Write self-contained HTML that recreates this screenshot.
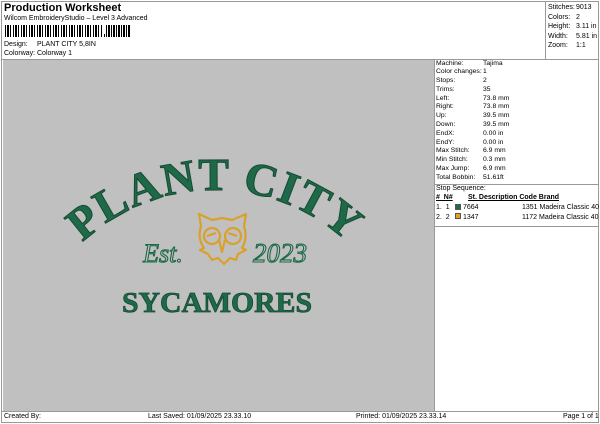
<!DOCTYPE html>
<html><head><meta charset="utf-8"><style>
*{margin:0;padding:0;box-sizing:border-box}
body{width:600px;height:424px;background:#fff;font-family:"Liberation Sans",sans-serif;color:#000;position:relative;overflow:hidden;font-size:7px}
.a{position:absolute;white-space:nowrap}
</style></head><body>
<div class="a" style="left:1px;top:1px;width:598px;height:422px;border:1px solid #999"></div>
<div class="a" style="left:4px;top:2px;font-size:11px;font-weight:bold">Production Worksheet</div>
<div class="a" style="left:4px;top:15px;font-size:7px">Wilcom EmbroideryStudio – Level 3 Advanced</div>
<div class="a" style="left:5px;top:25px;width:98px;height:12px;background:repeating-linear-gradient(90deg,#000 0 1px,#fff 1px 2px,#000 2px 4px,#fff 4px 5px,#000 5px 6px,#fff 6px 8px)"></div>
<div class="a" style="left:104px;top:34px;width:1px;height:3px;background:#000"></div>
<div class="a" style="left:106px;top:25px;width:24px;height:12px;background:repeating-linear-gradient(90deg,#000 0 1px,#fff 1px 2px,#000 2px 4px,#fff 4px 5px)"></div>
<div class="a" style="left:4px;top:41px">Design:</div>
<div class="a" style="left:37px;top:41px">PLANT CITY 5,8IN</div>
<div class="a" style="left:4px;top:50px">Colorway:</div>
<div class="a" style="left:37px;top:50px">Colorway 1</div>
<div class="a" style="left:1px;top:59px;width:598px;height:1px;background:#999"></div>
<div class="a" style="left:545px;top:1px;width:1px;height:58px;background:#999"></div>
<div class="a" style="left:548px;top:3px;line-height:9.5px">Stitches:<br>Colors:<br>Height:<br>Width:<br>Zoom:</div>
<div class="a" style="left:576px;top:3px;line-height:9.5px">9013<br>2<br>3.11 in<br>5.81 in<br>1:1</div>
<div class="a" style="left:3px;top:60px;width:431px;height:351px;background:#c0c0c0"></div>
<div class="a" style="left:434px;top:60px;width:1px;height:351px;background:#999"></div>
<div class="a" style="left:436px;top:59.5px;line-height:8.8px;font-size:6.8px">Machine:<br>Color changes:<br>Stops:<br>Trims:<br>Left:<br>Right:<br>Up:<br>Down:<br>EndX:<br>EndY:<br>Max Stitch:<br>Min Stitch:<br>Max Jump:<br>Total Bobbin:</div>
<div class="a" style="left:483px;top:59.5px;line-height:8.8px;font-size:6.8px">Tajima<br>1<br>2<br>35<br>73.8 mm<br>73.8 mm<br>39.5 mm<br>39.5 mm<br>0.00 in<br>0.00 in<br>6.9 mm<br>0.3 mm<br>6.9 mm<br>51.61ft</div>
<div class="a" style="left:435px;top:184px;width:164px;height:1px;background:#999"></div>
<div class="a" style="left:436px;top:185px">Stop Sequence:</div>
<div class="a" style="left:436px;top:194px;font-weight:bold;text-decoration:underline">#&nbsp; N#</div>
<div class="a" style="left:468px;top:194px;font-weight:bold;text-decoration:underline">St. Description Code Brand</div>
<div class="a" style="left:436px;top:203px;line-height:9.5px">1.&nbsp; 1<br>2.&nbsp; 2</div>
<div class="a" style="left:455px;top:204px;width:6px;height:6px;background:#1f6b4e;border:1px solid #555"></div>
<div class="a" style="left:455px;top:213px;width:6px;height:6px;background:#e8a020;border:1px solid #555"></div>
<div class="a" style="left:463px;top:203px;line-height:9.5px">7664<br>1347</div>
<div class="a" style="left:522px;top:203px;line-height:9.5px">1351 Madeira Classic 40<br>1172 Madeira Classic 40</div>
<div class="a" style="left:435px;top:226px;width:164px;height:1px;background:#999"></div>
<div class="a" style="left:1px;top:411px;width:598px;height:1px;background:#999"></div>
<div class="a" style="left:4px;top:413px">Created By:</div>
<div class="a" style="left:148px;top:413px">Last Saved: 01/09/2025 23.33.10</div>
<div class="a" style="left:356px;top:413px">Printed: 01/09/2025 23.33.14</div>
<div class="a" style="left:563px;top:413px">Page 1 of 1</div>
<svg class="a" style="left:0;top:0" width="600" height="424">
<defs><path id="arc" d="M 21 384 A 194 194 0 0 1 409 384"/></defs>
<text font-family="Liberation Serif,serif" font-weight="bold" font-size="46" fill="#1e6a48" stroke="#154a33" stroke-width="1" letter-spacing="1" text-anchor="middle"><textPath href="#arc" startOffset="50%">PLANT CITY</textPath></text>
<text x="163" y="262" font-family="Liberation Serif,serif" font-style="italic" font-size="26" fill="none" stroke="#1e6a48" stroke-width="1.1" text-anchor="middle">Est.</text>
<text x="280" y="262" font-family="Liberation Serif,serif" font-style="italic" font-size="27" fill="none" stroke="#1e6a48" stroke-width="1.1" text-anchor="middle">2023</text>
<text x="217" y="312" font-family="Liberation Serif,serif" font-weight="bold" font-size="28" fill="#1e6a48" stroke="#154a33" stroke-width="0.8" text-anchor="middle" textLength="190" lengthAdjust="spacingAndGlyphs">SYCAMORES</text>
<g fill="none" stroke="#d9a12a" stroke-width="2.2" stroke-linejoin="round">
<path d="M199 214 L212 220 L222 218 L232 220 L246 214 L244 226 Q248 238 242 248 L246 250 L238 254 L236 260 L230 258 L224 264 L218 258 L212 260 L208 254 L200 250 L204 248 Q197 238 201 226 Z"/>
<circle cx="212" cy="236" r="8"/><circle cx="233" cy="236" r="8"/>
<path d="M219 240 L222 252 L225 240"/>
<path d="M207 236 L216 233 M228 233 L237 236"/>
</g>
</svg>
</body></html>
